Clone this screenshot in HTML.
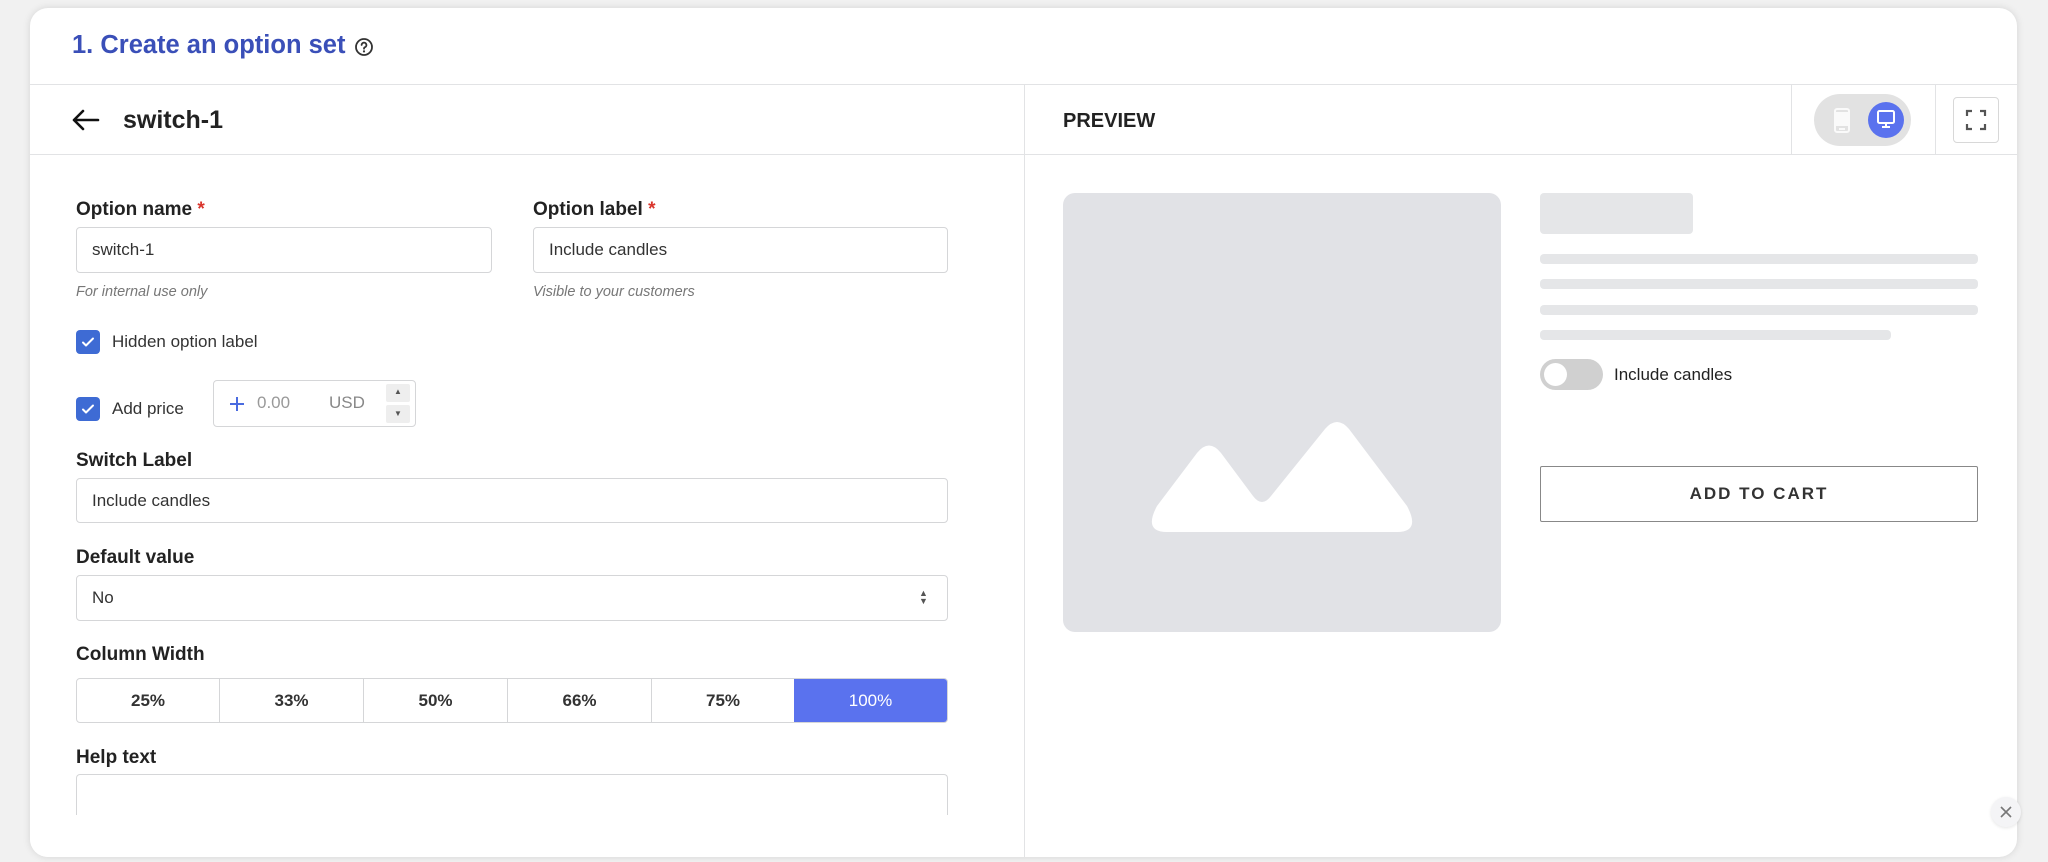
<!DOCTYPE html>
<html><head><meta charset="utf-8"><style>
*{box-sizing:border-box;margin:0;padding:0}
body{width:2048px;height:862px;background:#f1f1f1;font-family:"Liberation Sans",Arial,sans-serif;color:#222;position:relative;overflow:hidden}
.card{position:absolute;left:30px;top:8px;width:1987px;height:849px;background:#fff;border-radius:18px;box-shadow:0 0 8px rgba(0,0,0,.12);overflow:hidden}
.abs{position:absolute}
.t{position:absolute;white-space:nowrap}
.lbl{font-size:19px;font-weight:bold;color:#222}
.inp{position:absolute;border:1px solid #d5d6d8;border-radius:4px;background:#fff;font-size:17px;color:#333;padding-left:15px;display:flex;align-items:center}
.help{font-size:14.5px;font-style:italic;color:#777}
.cb{position:absolute;width:24px;height:24px;background:#3e6bd4;border-radius:4px}
.cb svg{position:absolute;left:4px;top:4px}
.star{color:#d9342b}
.sk{position:absolute;background:#e5e6e8;border-radius:4px}
</style></head><body>
<div class="card">
  <div class="t" style="left:42px;top:23px;font-size:25.5px;font-weight:bold;color:#3a4fb8">1. Create an option set</div>
  <svg class="abs" style="left:324px;top:29px" width="20" height="20" viewBox="0 0 20 20"><circle cx="10" cy="10" r="8" fill="none" stroke="#333" stroke-width="1.8"/><path d="M7.6 8a2.4 2.4 0 1 1 3.4 2.2c-.7.3-1 .8-1 1.5" fill="none" stroke="#333" stroke-width="1.8" stroke-linecap="round"/><circle cx="10" cy="14.4" r="1.1" fill="#333"/></svg>
  <div class="abs" style="left:0;top:76px;width:1987px;height:1px;background:#e2e3e5"></div>
  <div class="abs" style="left:0;top:146px;width:1987px;height:1px;background:#e2e3e5"></div>
  <div class="abs" style="left:994px;top:76px;width:1px;height:773px;background:#e2e3e5"></div>
  <div class="abs" style="left:1761px;top:76px;width:1px;height:70px;background:#e2e3e5"></div>
  <div class="abs" style="left:1905px;top:76px;width:1px;height:70px;background:#e2e3e5"></div>

  <svg class="abs" style="left:40px;top:100px" width="30" height="24" viewBox="0 0 30 24"><path d="M28 12H4M13 3L4 12l9 9" fill="none" stroke="#111" stroke-width="2.6" stroke-linecap="round" stroke-linejoin="round"/></svg>
  <div class="t" style="left:93px;top:98px;font-size:25px;font-weight:bold;color:#222">switch-1</div>

  <div class="t lbl" style="left:46px;top:191px">Option name <span class="star">*</span></div>
  <div class="inp" style="left:46px;top:219px;width:416px;height:46px">switch-1</div>
  <div class="t help" style="left:46px;top:276px">For internal use only</div>
  <div class="t lbl" style="left:503px;top:191px">Option label <span class="star">*</span></div>
  <div class="inp" style="left:503px;top:219px;width:415px;height:46px">Include candles</div>
  <div class="t help" style="left:503px;top:276px">Visible to your customers</div>

  <div class="cb" style="left:46px;top:322px"><svg width="16" height="16" viewBox="0 0 16 16"><path d="M3 8.5l3 3 7-7" fill="none" stroke="#fff" stroke-width="2" stroke-linecap="round" stroke-linejoin="round"/></svg></div>
  <div class="t" style="left:82px;top:324px;font-size:17px;color:#333">Hidden option label</div>
  <div class="cb" style="left:46px;top:389px"><svg width="16" height="16" viewBox="0 0 16 16"><path d="M3 8.5l3 3 7-7" fill="none" stroke="#fff" stroke-width="2" stroke-linecap="round" stroke-linejoin="round"/></svg></div>
  <div class="t" style="left:82px;top:391px;font-size:17px;color:#333">Add price</div>
  <div class="abs" style="left:183px;top:372px;width:203px;height:47px;border:1px solid #d5d6d8;border-radius:4px"></div>
  <svg class="abs" style="left:198px;top:387px" width="18" height="18" viewBox="0 0 18 18"><path d="M9 2v14M2 9h14" stroke="#4a6be0" stroke-width="2"/></svg>
  <div class="t" style="left:227px;top:385px;font-size:17px;color:#999">0.00</div>
  <div class="t" style="left:299px;top:385px;font-size:17px;color:#888">USD</div>
  <div class="abs" style="left:356px;top:376px;width:24px;height:18px;background:#eee;border-radius:2px"></div>
  <div class="abs" style="left:356px;top:397px;width:24px;height:18px;background:#eee;border-radius:2px"></div>
  <div class="t" style="left:364px;top:379px;font-size:8px;color:#555">▲</div>
  <div class="t" style="left:364px;top:401px;font-size:8px;color:#555">▼</div>

  <div class="t lbl" style="left:46px;top:442px">Switch Label</div>
  <div class="inp" style="left:46px;top:470px;width:872px;height:45px">Include candles</div>
  <div class="t lbl" style="left:46px;top:539px">Default value</div>
  <div class="inp" style="left:46px;top:567px;width:872px;height:46px">No</div>
  <div class="t" style="left:889px;top:581px;font-size:9px;line-height:8px;color:#555">▲<br>▼</div>
  <div class="t lbl" style="left:46px;top:636px">Column Width</div>
  <div class="abs" style="left:46px;top:670px;width:872px;height:45px;border:1px solid #d5d6d8;border-radius:4px;display:flex;font-size:17px;font-weight:bold;color:#333;overflow:hidden">
    <div style="width:143px;border-right:1px solid #d5d6d8;display:flex;align-items:center;justify-content:center">25%</div>
    <div style="width:144px;border-right:1px solid #d5d6d8;display:flex;align-items:center;justify-content:center">33%</div>
    <div style="width:144px;border-right:1px solid #d5d6d8;display:flex;align-items:center;justify-content:center">50%</div>
    <div style="width:144px;border-right:1px solid #d5d6d8;display:flex;align-items:center;justify-content:center">66%</div>
    <div style="width:142px;display:flex;align-items:center;justify-content:center">75%</div>
    <div style="flex:1;background:#5a72ee;color:#fff;display:flex;align-items:center;justify-content:center;font-weight:normal">100%</div>
  </div>
  <div class="t lbl" style="left:46px;top:739px">Help text</div>
  <div class="abs" style="left:46px;top:766px;width:872px;height:60px;border:1px solid #d5d6d8;border-bottom:none;border-radius:4px 4px 0 0"></div>
  <div class="abs" style="left:0;top:807px;width:994px;height:42px;background:#fff"></div>

  <div class="t" style="left:1033px;top:102px;font-size:20px;font-weight:bold;color:#222">PREVIEW</div>
  <div class="abs" style="left:1784px;top:86px;width:97px;height:52px;background:#e2e2e2;border-radius:26px"></div>
  <svg class="abs" style="left:1804px;top:100px" width="16" height="25" viewBox="0 0 16 25"><rect x="1" y="1" width="14" height="23" rx="2" fill="none" stroke="#fafafa" stroke-width="2"/><rect x="2" y="4" width="12" height="14" fill="#fafafa"/><rect x="5" y="20" width="6" height="2" fill="#fafafa"/></svg>
  <div class="abs" style="left:1838px;top:94px;width:36px;height:36px;background:#5a72ee;border-radius:50%"></div>
  <svg class="abs" style="left:1846px;top:101px" width="20" height="20" viewBox="0 0 20 20"><rect x="2" y="2" width="16" height="12" rx="1.5" fill="none" stroke="#fff" stroke-width="2"/><path d="M10 14v3M6 18h8" stroke="#fff" stroke-width="2"/></svg>
  <div class="abs" style="left:1923px;top:89px;width:46px;height:46px;border:1px solid #d8d8d8;border-radius:4px"></div>
  <svg class="abs" style="left:1935px;top:101px" width="22" height="22" viewBox="0 0 22 22"><path d="M2 7V2h5M15 2h5v5M20 15v5h-5M7 20H2v-5" fill="none" stroke="#555" stroke-width="2.2"/></svg>

  <div class="abs" style="left:1033px;top:185px;width:438px;height:439px;background:#e1e2e6;border-radius:12px"></div>
  <svg class="abs" style="left:1119px;top:412px" width="266" height="116" viewBox="0 0 266 116"><path d="M8 86L48 33Q60 18 72 33L104 76Q113 88 122 76L176 9Q188 -5 200 9L258 86Q272 112 248 112H18Q-6 112 8 86Z" fill="#fff"/></svg>
  <div class="sk" style="left:1510px;top:185px;width:153px;height:41px"></div>
  <div class="sk" style="left:1510px;top:246px;width:438px;height:10px"></div>
  <div class="sk" style="left:1510px;top:271px;width:438px;height:10px"></div>
  <div class="sk" style="left:1510px;top:297px;width:438px;height:10px"></div>
  <div class="sk" style="left:1510px;top:322px;width:351px;height:10px"></div>
  <div class="abs" style="left:1510px;top:351px;width:63px;height:31px;background:#d0d0d0;border-radius:16px"></div>
  <div class="abs" style="left:1514px;top:355px;width:23px;height:23px;background:#fff;border-radius:50%"></div>
  <div class="t" style="left:1584px;top:357px;font-size:17px;color:#222">Include candles</div>
  <div class="abs" style="left:1510px;top:458px;width:438px;height:56px;border:1.5px solid #888;border-radius:2px;display:flex;align-items:center;justify-content:center;font-size:17px;font-weight:bold;letter-spacing:2px;color:#333">ADD TO CART</div>
</div>
<div class="abs" style="left:1991px;top:797px;width:30px;height:30px;background:#f4f4f6;border-radius:50%;box-shadow:0 1px 3px rgba(0,0,0,.1)"></div>
<svg class="abs" style="left:1999px;top:805px" width="14" height="14" viewBox="0 0 14 14"><path d="M2 2l10 10M12 2L2 12" stroke="#777" stroke-width="1.6"/></svg>
</body></html>
